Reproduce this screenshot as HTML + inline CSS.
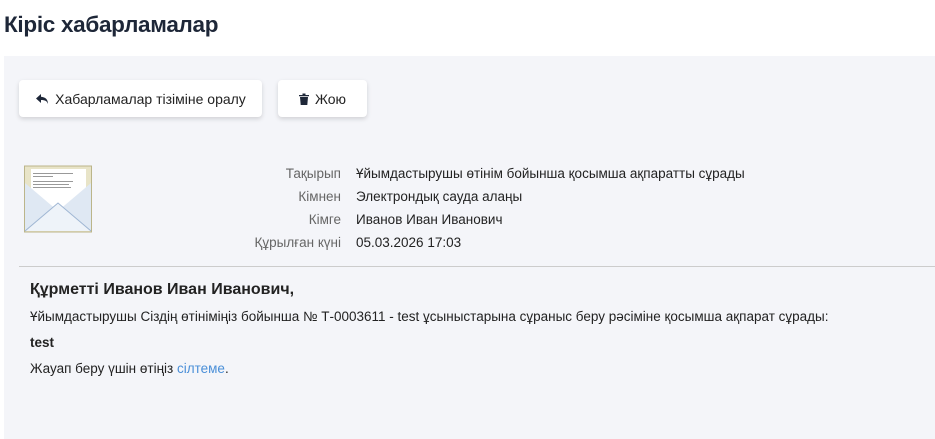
<!DOCTYPE html>
<html><head><meta charset="utf-8"><style>
*{margin:0;padding:0;box-sizing:border-box}
body{width:935px;height:439px;overflow:hidden;background:#fff;font-family:"Liberation Sans",sans-serif;color:#222;position:relative}
h1{position:absolute;left:4px;top:12px;font-size:22.5px;font-weight:bold;color:#1e2738;letter-spacing:-0.3px}
.panel{position:absolute;left:4px;top:56px;right:0;bottom:0;background:#f4f5f9}
.btn{position:absolute;top:80px;height:37px;background:#fff;border-radius:4px;box-shadow:0 2px 5px rgba(0,0,0,.15);font-size:14px;color:#222;display:flex;align-items:center;justify-content:center;gap:6px}
.lbl{position:absolute;right:594px;font-size:13.5px;color:#666;text-align:right}
.val{position:absolute;left:356px;font-size:13.5px;color:#222}
.hr{position:absolute;left:19px;right:0;top:266px;border-top:1px solid #ccc}
.t{position:absolute;left:30px;font-size:13.5px;color:#222}
</style></head><body>
<h1>Кіріс хабарламалар</h1>
<div class="panel"></div>
<div class="btn" style="left:19px;width:243px"><svg width="14" height="12" viewBox="0 0 14 12"><path d="M6 1L1 5.5 6 10V7c4 0 6 1 7 4 0-5-3-7-7-7.3z" fill="#1e2738"/></svg>Хабарламалар тізіміне оралу</div>
<div class="btn" style="left:278px;width:89px"><svg width="10" height="12" viewBox="0 0 10 12"><path d="M0 2h10v1.3H0zM3.5 0.5h3v1.5h-3zM1 4h8l-.7 8H1.7z" fill="#1e2738"/></svg>Жою</div>
<svg style="position:absolute;left:24px;top:163px" width="69" height="70" viewBox="0 0 69 70">
<rect x="0.5" y="3" width="67" height="66" fill="#e8e4c8" stroke="#bbb58a"/>
<rect x="7" y="6" width="55" height="38" fill="#fff"/>
<g fill="#999"><rect x="9" y="10" width="40" height="1"/><rect x="9" y="13" width="20" height="1"/><rect x="9" y="18" width="40" height="1"/><rect x="9" y="21" width="36" height="1"/><rect x="9" y="24" width="38" height="1"/></g>
<path d="M1 20L34 48 67 20V68H1z" fill="#dfe8f3"/>
<path d="M1 68L34 40 67 68" fill="#eef3f9" stroke="#9fb6d3"/>
</svg>
<div class="lbl" style="top:166px">Тақырып</div><div class="val" style="top:166px">Ұйымдастырушы өтінім бойынша қосымша ақпаратты сұрады</div>
<div class="lbl" style="top:189px">Кімнен</div><div class="val" style="top:189px">Электрондық сауда алаңы</div>
<div class="lbl" style="top:212px">Кімге</div><div class="val" style="top:212px">Иванов Иван Иванович</div>
<div class="lbl" style="top:235px">Құрылған күні</div><div class="val" style="top:235px">05.03.2026 17:03</div>
<div class="hr"></div>
<div class="t" style="top:281px;font-size:16px;font-weight:bold">Құрметті Иванов Иван Иванович,</div>
<div class="t" style="top:309px">Ұйымдастырушы Сіздің өтініміңіз бойынша № Т-0003611 - test ұсыныстарына сұраныс беру рәсіміне қосымша ақпарат сұрады:</div>
<div class="t" style="top:335px;font-weight:bold">test</div>
<div class="t" style="top:361px">Жауап беру үшін өтіңіз <span style="color:#4a8fd8">сілтеме</span>.</div>
</body></html>
